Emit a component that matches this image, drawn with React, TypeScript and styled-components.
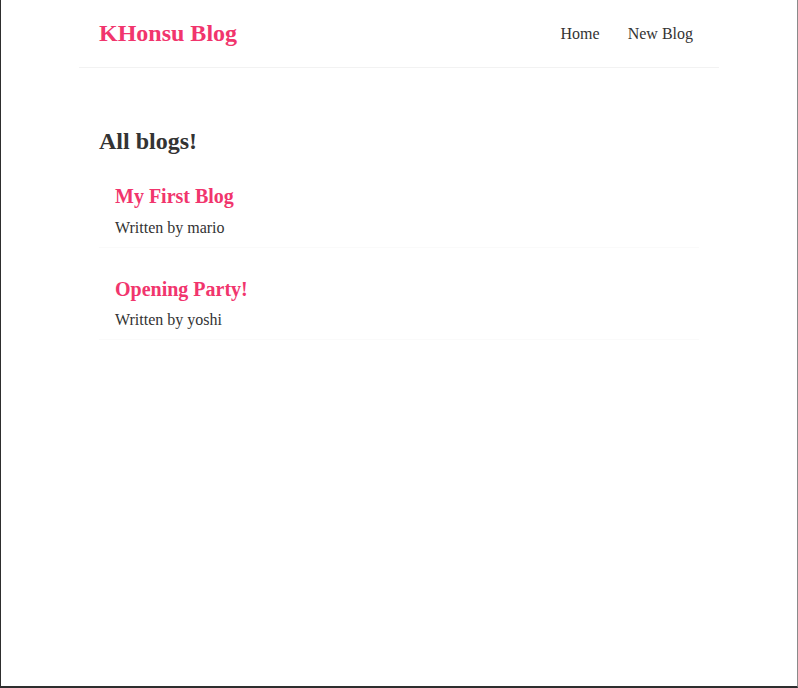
import React from "react";
import styled, { createGlobalStyle } from "styled-components";

const Global = createGlobalStyle`
  * { margin: 0; font-family: "Liberation Serif", "Times New Roman", serif; color: #333; }
  html, body { margin: 0; padding: 0; background: #ffffff; }
`;

const Frame = styled.div`
  box-sizing: border-box;
  width: 798px;
  height: 688px;
  border-left: 1px solid #2e2e2e;
  border-right: 1px solid #8a8a8a;
  border-bottom: 2px solid #2e2e2e;
  background: #ffffff;
  overflow: hidden;
`;

const Navbar = styled.nav`
  padding: 20px;
  display: flex;
  align-items: center;
  max-width: 600px;
  margin: 0 auto;
  border-bottom: 1px solid #f2f2f2;
`;

const Brand = styled.h1`
  font-size: 24px;
  font-weight: bold;
  color: #f1356d;
`;

const Links = styled.div`
  margin-left: auto;
`;

const NavLink = styled.a`
  margin-left: 16px;
  text-decoration: none;
  padding: 6px;
  font-size: 16px;
  cursor: pointer;
`;

const Content = styled.main`
  max-width: 600px;
  margin: 40px auto;
  padding: 20px;
`;

const Heading = styled.h2`
  font-size: 24px;
  font-weight: bold;
`;

const Preview = styled.div`
  padding: 10px 16px;
  margin: 20px 0;
  border-bottom: 1px solid #fafafa;
`;

const PreviewTitle = styled.h2`
  font-size: 20px;
  font-weight: bold;
  color: #f1356d;
  margin-bottom: 10.5px;
`;

const Author = styled.p`
  font-size: 16px;
`;

const blogs = [
  { id: 1, title: "My First Blog", author: "mario" },
  { id: 2, title: "Opening Party!", author: "yoshi" },
];

export default function App() {
  return (
    <>
      <Global />
      <Frame>
        <Navbar>
          <Brand>KHonsu Blog</Brand>
          <Links>
            <NavLink href="#">Home</NavLink>
            <NavLink href="#">New Blog</NavLink>
          </Links>
        </Navbar>
        <Content>
          <Heading>All blogs!</Heading>
          {blogs.map((b) => (
            <Preview key={b.id}>
              <PreviewTitle>{b.title}</PreviewTitle>
              <Author>Written by {b.author}</Author>
            </Preview>
          ))}
        </Content>
      </Frame>
    </>
  );
}
